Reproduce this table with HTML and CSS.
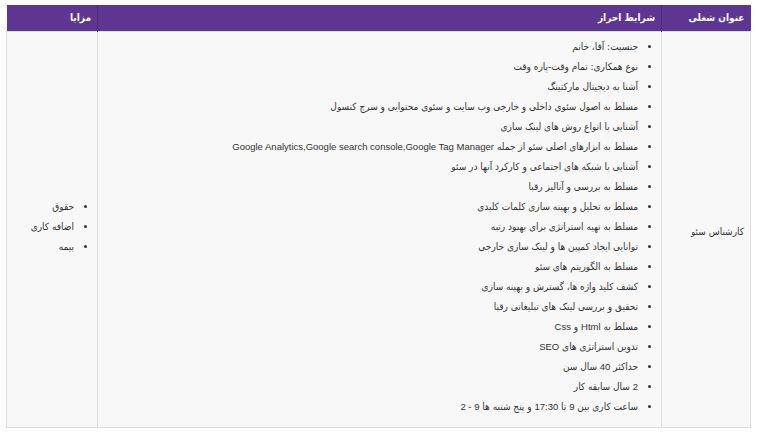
FILE: index.html
```html
<!DOCTYPE html>
<html lang="fa" dir="rtl">
<head>
<meta charset="utf-8">
<link rel="stylesheet" href="styles.css">
</head>
<body>
<table class="jobs">
  <thead>
    <tr>
      <th class="c-title">عنوان شغلی</th>
      <th class="c-req">شرایط احراز</th>
      <th class="c-ben">مزایا</th>
    </tr>
  </thead>
  <tbody>
    <tr>
      <td class="c-title">کارشناس سئو</td>
      <td class="c-req">
        <ul>
          <li>جنسیت: آقا، خانم</li>
          <li>نوع همکاری: تمام وقت-پاره وقت</li>
          <li>آشنا به دیجیتال مارکتینگ</li>
          <li>مسلط به اصول سئوی داخلی و خارجی وب سایت و سئوی محتوایی و سرچ کنسول</li>
          <li>آشنایی با انواع روش های لینک سازی</li>
          <li>مسلط به ابزارهای اصلی سئو از جمله <span class="en">Google Analytics,Google search console,Google Tag Manager</span></li>
          <li>آشنایی با شبکه های اجتماعی و کارکرد آنها در سئو</li>
          <li>مسلط به بررسی و آنالیز رقبا</li>
          <li>مسلط به تحلیل و بهینه سازی کلمات کلیدی</li>
          <li>مسلط به تهیه استراتژی برای بهبود رتبه</li>
          <li>توانایی ایجاد کمپین ها و لینک سازی خارجی</li>
          <li>مسلط به الگوریتم های سئو</li>
          <li>کشف کلید واژه ها، گسترش و بهینه سازی</li>
          <li>تحقیق و بررسی لینک های تبلیغاتی رقبا</li>
          <li>مسلط به <span class="en">Html</span> و <span class="en">Css</span></li>
          <li>تدوین استراتژی های <span class="en">SEO</span></li>
          <li>حداکثر <span class="en">40</span> سال سن</li>
          <li><span class="en">2</span> سال سابقه کار</li>
          <li>ساعت کاری بین <span class="en">9</span> تا <span class="en">17:30</span> و پنج شنبه ها <span class="en">9 - 2</span></li>
        </ul>
      </td>
      <td class="c-ben">
        <ul>
          <li>حقوق</li>
          <li>اضافه کاری</li>
          <li>بیمه</li>
        </ul>
      </td>
    </tr>
  </tbody>
</table>
</body>
</html>
```
FILE: styles.css
```css
html, body {
  margin: 0;
  padding: 0;
  background: #ffffff;
}
body {
  padding: 5px 6px;
  font-family: "DejaVu Sans", sans-serif;
  font-stretch: condensed;
  font-size: 10px;
  color: #333333;
}
.en {
  font-family: "Liberation Sans Narrow", "Liberation Sans", sans-serif;
  font-size: 9.5px;
  line-height: 1;
}
.jobs {
  width: 745px;
  border-collapse: collapse;
  table-layout: fixed;
  background: #f8f8f8;
}
.jobs th {
  background: #5f3592;
  color: #ffffff;
  font-weight: bold;
  font-size: 10px;
  text-align: right;
  height: 26px;
  padding: 0 6px;
  border-left: 1px solid #4e2a7a;
  box-sizing: border-box;
}
.jobs th:last-child { border-left: none; }
.jobs td {
  border: 1px solid #dddddd;
  vertical-align: middle;
  text-align: right;
  padding: 5px 6px 0 6px;
  line-height: 20px;
}
.c-title { width: 89px; }
.c-ben { width: 91px; }
.jobs ul {
  margin: 0 0 10px 0;
  padding: 0 17px 0 0;
  list-style: disc;
}
.jobs li::marker {
  font-size: 10px;
}
```
